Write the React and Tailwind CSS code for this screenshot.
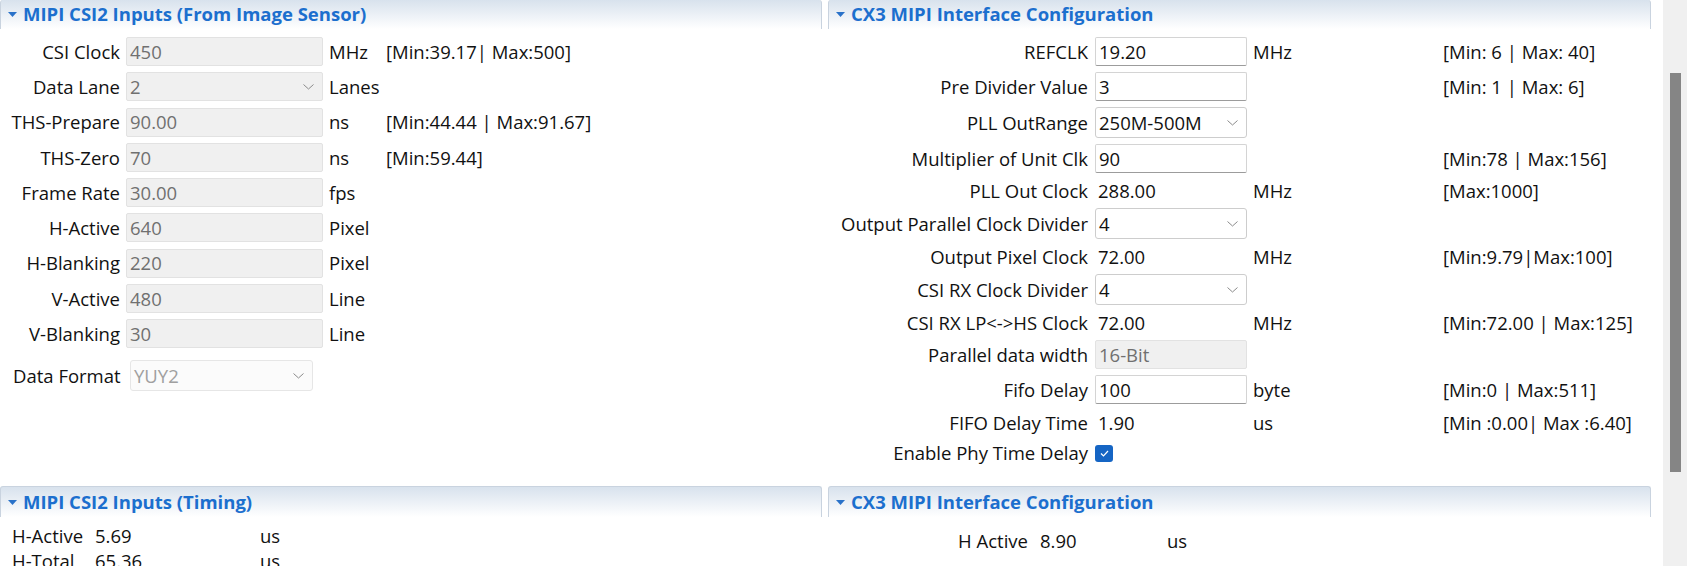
import React from 'react';

const Chevron = () => (
  <svg width="11" height="6" viewBox="0 0 11 6" className="shrink-0">
    <polyline points="0.5,0.5 5.5,5 10.5,0.5" fill="none" stroke="#8a8a8a" strokeWidth="1" />
  </svg>
);

const Tri = () => (
  <svg width="9" height="5" viewBox="0 0 9 5" className="shrink-0">
    <polygon points="0,0 9,0 4.5,5" fill="#2a72c9" />
  </svg>
);

const Header = ({ title, first }) => (
  <div
    className={
      'shrink-0 flex items-center gap-[6px] pl-[7px] border-x border-[#c9d3df] rounded-t-[3px] bg-linear-to-b from-[#d8e2ed] to-white ' +
      (first ? 'h-[29px] border-t-0' : 'h-[31px] border-t')
    }
  >
    <Tri />
    <span className="font-bold text-[18.5px] text-[#1c6fce] leading-none">{title}</span>
  </div>
);

// champs de la colonne gauche (tous désactivés)
const leftRows = [
  { label: 'CSI Clock', value: '450', unit: 'MHz', range: '[Min:39.17| Max:500]' },
  { label: 'Data Lane', value: '2', unit: 'Lanes', select: true },
  { label: 'THS-Prepare', value: '90.00', unit: 'ns', range: '[Min:44.44 | Max:91.67]' },
  { label: 'THS-Zero', value: '70', unit: 'ns', range: '[Min:59.44]' },
  { label: 'Frame Rate', value: '30.00', unit: 'fps' },
  { label: 'H-Active', value: '640', unit: 'Pixel' },
  { label: 'H-Blanking', value: '220', unit: 'Pixel' },
  { label: 'V-Active', value: '480', unit: 'Line' },
  { label: 'V-Blanking', value: '30', unit: 'Line' },
];

const rightRows = [
  { type: 'input', label: 'REFCLK', value: '19.20', unit: 'MHz', range: '[Min: 6 | Max: 40]' },
  { type: 'input', label: 'Pre Divider Value', value: '3', range: '[Min: 1 | Max: 6]' },
  { type: 'select', label: 'PLL OutRange', value: '250M-500M' },
  { type: 'input', label: 'Multiplier of Unit Clk', value: '90', range: '[Min:78 | Max:156]' },
  { type: 'text', label: 'PLL Out Clock', value: '288.00', unit: 'MHz', range: '[Max:1000]' },
  { type: 'select', label: 'Output Parallel Clock Divider', value: '4' },
  { type: 'text', label: 'Output Pixel Clock', value: '72.00', unit: 'MHz', range: '[Min:9.79|Max:100]' },
  { type: 'select', label: 'CSI RX Clock Divider', value: '4' },
  { type: 'text', label: 'CSI RX LP<->HS Clock', value: '72.00', unit: 'MHz', range: '[Min:72.00 | Max:125]' },
  { type: 'disabled', label: 'Parallel data width', value: '16-Bit' },
  { type: 'input', label: 'Fifo Delay', value: '100', unit: 'byte', range: '[Min:0 | Max:511]' },
  { type: 'text', label: 'FIFO Delay Time', value: '1.90', unit: 'us', range: '[Min :0.00| Max :6.40]', tall: true },
  { type: 'check', label: 'Enable Phy Time Delay' },
];

const LeftRow = ({ row }) => (
  <div className="flex items-center h-[29px]">
    <div className="w-[120px] text-right whitespace-nowrap">{row.label}</div>
    <div className="ml-[6px] w-[197px] h-[29px] flex items-center justify-between pl-[3px] pr-[8px] bg-[#f0f0f0] border border-[#e2e2e2] rounded-[2px] text-[#707070]">
      <span>{row.value}</span>
      {row.select && <Chevron />}
    </div>
    <div className="ml-[6px] w-[57px]">{row.unit}</div>
    <div className="whitespace-nowrap">{row.range}</div>
  </div>
);

const RightField = ({ row }) => {
  if (row.type === 'input')
    return (
      <div className="w-[152px] h-[29px] flex items-center pl-[3px] bg-white border border-[#d4d4d4] border-b-[#9c9c9c] rounded-[2px]">
        {row.value}
      </div>
    );
  if (row.type === 'select')
    return (
      <div className="w-[152px] h-[31px] flex items-center justify-between pl-[3px] pr-[8px] bg-white border border-[#cdcdcd] rounded-[3px]">
        <span>{row.value}</span>
        <Chevron />
      </div>
    );
  if (row.type === 'disabled')
    return (
      <div className="w-[152px] h-[29px] flex items-center pl-[3px] bg-[#f0f0f0] border border-[#e2e2e2] rounded-[2px] text-[#707070]">
        {row.value}
      </div>
    );
  if (row.type === 'check')
    return (
      <div className="w-[152px] flex items-center">
        <div className="w-[18px] h-[17px] rounded-[3px] bg-[#1565c4] flex items-center justify-center">
          <svg width="9" height="7" viewBox="0 0 9 7">
            <polyline points="1,3.5 3.5,6 8,1" fill="none" stroke="white" strokeWidth="1.2" />
          </svg>
        </div>
      </div>
    );
  return <div className="w-[152px] pl-[3px]">{row.value}</div>;
};

const RightRow = ({ row }) => {
  const h =
    row.type === 'select' ? 'h-[31px]' : row.type === 'text' ? (row.tall ? 'h-[26px]' : 'h-[23px]') : row.type === 'check' ? 'h-[22px]' : 'h-[29px]';
  return (
    <div className={'flex items-center ' + h}>
      <div className="w-[260px] text-right whitespace-nowrap">{row.label}</div>
      <div className="ml-[7px]">
        <RightField row={row} />
      </div>
      <div className="ml-[6px] w-[190px]">{row.unit}</div>
      <div className="whitespace-nowrap">{row.range}</div>
    </div>
  );
};

export default function App() {
  return (
    <div className="w-[1687px] h-[566px] overflow-hidden bg-white flex font-['Open_Sans',sans-serif] text-[18.5px] text-[#111]">
      <div className="w-[1651px] h-full overflow-hidden flex flex-col">
        {/* sections du haut */}
        <div className="h-[486px] shrink-0 flex gap-[6px]">
          <div className="w-[822px] flex flex-col">
            <Header title="MIPI CSI2 Inputs (From Image Sensor)" first />
            <div className="pt-[8px] flex flex-col gap-[6.3px]">
              {leftRows.map((r) => (
                <LeftRow key={r.label} row={r} />
              ))}
            </div>
            <div className="mt-[12px] flex items-center h-[31px]">
              <div className="pl-[13px] w-[130px] whitespace-nowrap">Data Format</div>
              <div className="w-[183px] h-[31px] flex items-center justify-between pl-[3px] pr-[8px] bg-[#fbfbfb] border border-[#e6e6e6] rounded-[3px] text-[#a0a0a0]">
                <span>YUY2</span>
                <Chevron />
              </div>
            </div>
          </div>
          <div className="flex-1 flex flex-col">
            <Header title="CX3 MIPI Interface Configuration" first />
            <div className="pt-[8px] flex flex-col gap-[6px]">
              {rightRows.map((r) => (
                <RightRow key={r.label} row={r} />
              ))}
            </div>
          </div>
        </div>

        {/* sections du bas */}
        <div className="shrink-0 flex gap-[6px]">
          <div className="w-[822px] flex flex-col">
            <Header title="MIPI CSI2 Inputs (Timing)" />
            <div className="pt-[6px] pl-[12px] flex flex-col">
              <div className="flex items-center h-[25px]">
                <div className="w-[83px]">H-Active</div>
                <div className="w-[165px]">5.69</div>
                <div>us</div>
              </div>
              <div className="flex items-center h-[25px]">
                <div className="w-[83px]">H-Total</div>
                <div className="w-[165px]">65.36</div>
                <div>us</div>
              </div>
            </div>
          </div>
          <div className="flex-1 flex flex-col">
            <Header title="CX3 MIPI Interface Configuration" />
            <div className="pt-[11px] flex flex-col">
              <div className="flex items-center h-[25px]">
                <div className="w-[200px] text-right">H Active</div>
                <div className="ml-[12px] w-[127px]">8.90</div>
                <div>us</div>
              </div>
            </div>
          </div>
        </div>
      </div>

      {/* barre de défilement */}
      <div className="ml-[12px] w-[24px] h-full bg-[#f0f0f0] pt-[73px] pl-[7px]">
        <div className="w-[11px] h-[399px] bg-[#858585]" />
      </div>
    </div>
  );
}
